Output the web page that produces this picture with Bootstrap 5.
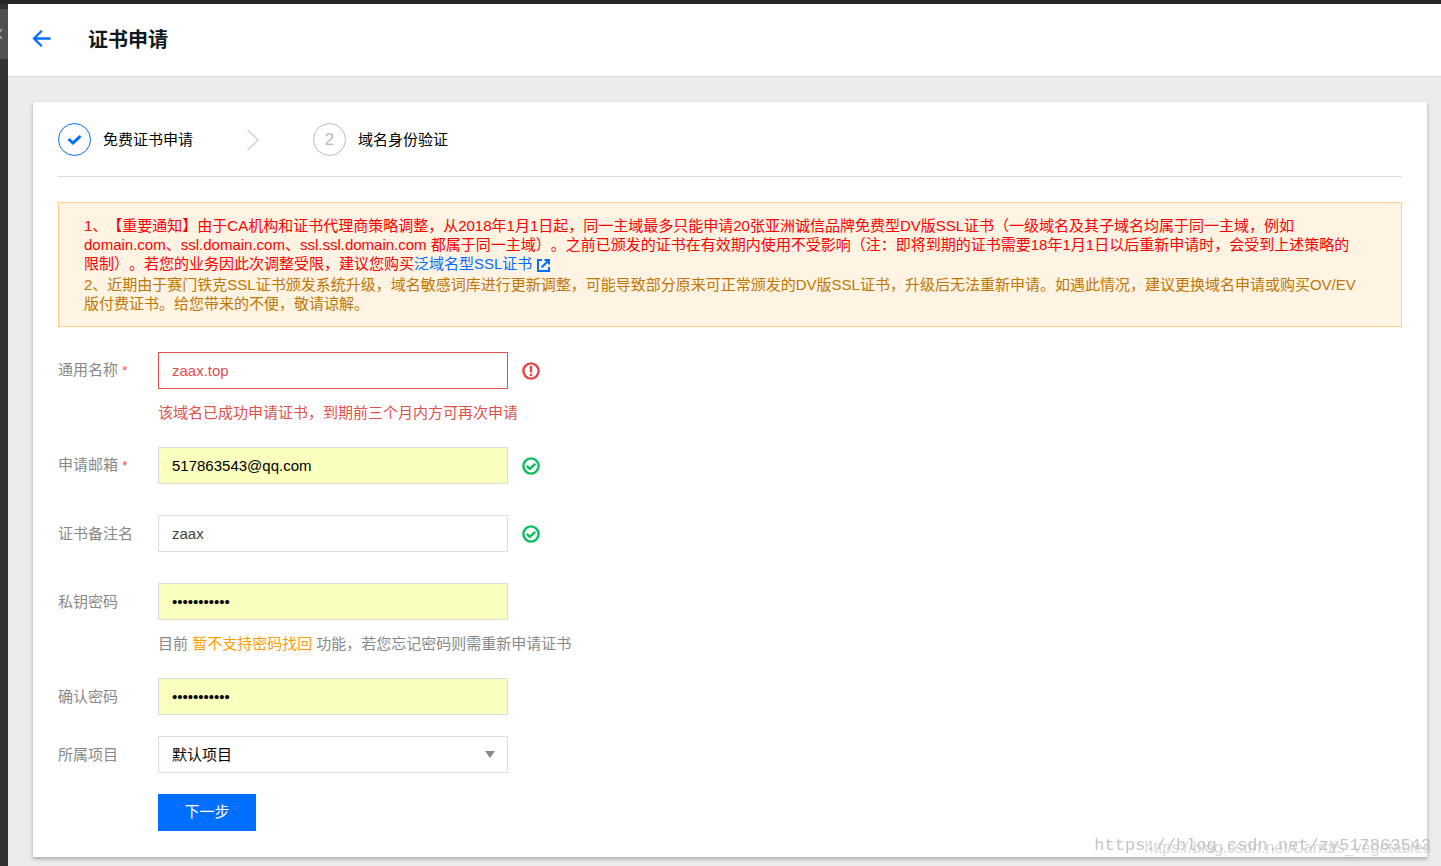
<!DOCTYPE html>
<html lang="zh-CN">
<head>
<meta charset="utf-8">
<meta name="viewport" content="width=device-width, initial-scale=1">
<title>证书申请</title>
<link href="https://cdn.jsdelivr.net/npm/bootstrap@5.3.0/dist/css/bootstrap.min.css" rel="stylesheet">
<style>
  body { font-family: "Liberation Sans", "Noto Sans CJK SC", sans-serif; font-size: 15px; line-height: 20px; color: #000; background: #ececec; text-spacing-trim: space-all; }
  a { color: #006eff; text-decoration: none; }
  .topline { height: 4px; background: #262626; }
  .side-rail { width: 8px; background: #333; padding-top: 5px; }
  .rail-toggle { width: 8px; height: 50px; background: #505050; color: #aaa; border: 0; }
  .page-head { height: 73px; padding: 0 24px; gap: 36px; border-bottom: 1px solid #d9dcdc; }
  .page-head h1 { font-size: 20px; line-height: 28px; font-weight: 700; color: #111820; }
  .page-body { padding: 25px 14px 9px 25px; }
  .panel { background: #fff; box-shadow: 0 2px 4px rgba(0,0,0,.3); padding: 21px 25px 26px; }
  .steps { padding-bottom: 20px; border-bottom: 1px solid #ddd; margin-bottom: 25px; list-style: none; }
  .step-dot { width: 33px; height: 33px; border: 1px solid #bbb; color: #bbb; font-size: 17px; margin-right: 12px; }
  .step-dot.done { border-color: #006eff; color: #006eff; }
  .step-sep { margin: 0 54px; }
  .notice { background: #fff3e3; border: 1px solid #ffd18b; color: #c07600; padding: 13px 40px 13px 25px; line-height: 19px; margin-bottom: 25px; }
  .notice p { margin: 0 0 2px; }
  .notice .urgent { color: #f00; }
  .form-line { display: grid; grid-template-columns: 100px minmax(0, 350px) 32px; align-items: center; margin-bottom: 31px; }
  .form-line.hinted { margin-bottom: 24px; }
  .form-line.tight { margin-bottom: 21px; }
  .form-line label { color: #888; }
  .form-line label span { color: #e1504a; font-size: 13px; }
  .form-line .form-control, .form-line .form-select { height: 37px; padding: 0 13px; font-size: 15px; line-height: 20px; color: #444; border: 1px solid #ddd; border-radius: 0; }
  .form-line .form-select { color: #000; background: #fff url("data:image/svg+xml,%3Csvg xmlns='http://www.w3.org/2000/svg' viewBox='0 0 10 7'%3E%3Cpath fill='%23888' d='M0 0h10L5 7z'/%3E%3C/svg%3E") no-repeat right 12px center / 10px 7px; }
  .form-line .is-bad { color: #e1504a; border-color: #e1504a; }
  .form-line .filled { background: #faffbd; color: #000; }
  .form-line svg { margin-left: 14px; }
  .hint { grid-column: 2 / -1; margin-top: 14px; color: #888; white-space: nowrap; }
  .hint.bad { color: #e1504a; }
  .hint em { font-style: normal; color: #ff9d00; }
  .next-btn { margin-left: 100px; width: 98px; height: 37px; padding: 0; font-size: 15px; background: #006eff; color: #fff; border: 0; border-radius: 0; }
  .stamp { right: 10px; bottom: 6px; width: 340px; height: 28px; pointer-events: none; white-space: nowrap; }
  .stamp span { position: absolute; right: 0; bottom: 0; }
  .stamp .mono-mark { font: 17px/28px "Liberation Mono", monospace; color: #c4c4be; }
  .stamp .plain-mark { font-size: 16px; line-height: 24px; color: rgba(200,200,200,.7); }
</style>
</head>
<body class="d-flex flex-column min-vh-100">
<div class="topline"></div>
<div class="d-flex flex-grow-1">
  <aside class="side-rail flex-shrink-0">
    <button class="rail-toggle d-block p-0" type="button" aria-label="展开菜单"><svg class="d-block" width="8" height="12" viewBox="0 0 8 12" fill="none" stroke="currentColor" stroke-width="1.5"><path d="M2 1-2 6 2 11"/></svg></button>
  </aside>
  <div class="flex-grow-1">
    <header class="page-head bg-white d-flex align-items-center">
      <a href="#" class="d-flex" aria-label="返回"><svg width="20" height="20" viewBox="0 0 20 20" fill="none" stroke="#006eff" stroke-width="2.3"><path d="M18.500 8.500H3M9.800 .800 2 8.500l7.800 7.700"/></svg></a>
      <h1 class="m-0">证书申请</h1>
    </header>
    <main class="page-body">
      <section class="panel">
        <ol class="steps d-flex align-items-center ps-0">
          <li class="d-flex align-items-center"><span class="step-dot done rounded-circle d-flex align-items-center justify-content-center"><svg width="15" height="12" viewBox="0 0 15 12" fill="none" stroke="currentColor" stroke-width="3"><path d="m1.500 5 4.500 4L13.500 2"/></svg></span>免费证书申请</li>
          <li class="step-sep d-flex" aria-hidden="true"><svg width="12" height="22" viewBox="0 0 12 22" fill="none" stroke="#ccc" stroke-width="1.200"><path d="m.5 1 10.500 10L.5 21"/></svg></li>
          <li class="d-flex align-items-center"><span class="step-dot rounded-circle d-flex align-items-center justify-content-center">2</span>域名身份验证</li>
        </ol>
        <div class="notice">
          <p class="urgent">1、【重要通知】由于CA机构和证书代理商策略调整，从2018年1月1日起，同一主域最多只能申请20张亚洲诚信品牌免费型DV版SSL证书（一级域名及其子域名均属于同一主域，例如 domain.com、ssl.domain.com、ssl.ssl.domain.com 都属于同一主域）。之前已颁发的证书在有效期内使用不受影响（注：即将到期的证书需要18年1月1日以后重新申请时，会受到上述策略的限制）。若您的业务因此次调整受限，建议您购买<a href="#">泛域名型SSL证书 <svg width="13" height="13" viewBox="0 0 13 13" fill="none" stroke="currentColor" stroke-width="2"><path d="M5 1H1v11h11V8M7.500 1H12v4.500M12 1 4.500 8.500"/></svg></a></p>
          <p class="m-0">2、近期由于赛门铁克SSL证书颁发系统升级，域名敏感词库进行更新调整，可能导致部分原来可正常颁发的DV版SSL证书，升级后无法重新申请。如遇此情况，建议更换域名申请或购买OV/EV版付费证书。给您带来的不便，敬请谅解。</p>
        </div>
        <form>
          <div class="form-line hinted">
            <label for="cn">通用名称 <span>*</span></label>
            <input id="cn" class="form-control is-bad" type="text" value="zaax.top">
            <svg width="18" height="18" viewBox="0 0 18 18" fill="none" stroke="#e54545" stroke-width="2.400"><circle cx="9" cy="9" r="7.600"/><path d="M9 4v6.500M9 11.800v2.200"/></svg>
            <div class="hint bad">该域名已成功申请证书，到期前三个月内方可再次申请</div>
          </div>
          <div class="form-line">
            <label for="mail">申请邮箱 <span>*</span></label>
            <input id="mail" class="form-control filled" type="email" value="517863543@qq.com">
            <svg width="18" height="18" viewBox="0 0 18 18" fill="none" stroke="#0abf5b" stroke-width="2.400"><circle cx="9" cy="9" r="7.600"/><path d="m4.800 8.800 3 3 5.400-5"/></svg>
          </div>
          <div class="form-line">
            <label for="alias">证书备注名</label>
            <input id="alias" class="form-control" type="text" value="zaax">
            <svg width="18" height="18" viewBox="0 0 18 18" fill="none" stroke="#0abf5b" stroke-width="2.400"><circle cx="9" cy="9" r="7.600"/><path d="m4.800 8.800 3 3 5.400-5"/></svg>
          </div>
          <div class="form-line hinted">
            <label for="pw">私钥密码</label>
            <input id="pw" class="form-control filled" type="password" value="abcdefghijk">
            <div class="hint">目前 <em>暂不支持密码找回</em> 功能，若您忘记密码则需重新申请证书</div>
          </div>
          <div class="form-line tight">
            <label for="pw2">确认密码</label>
            <input id="pw2" class="form-control filled" type="password" value="abcdefghijk">
          </div>
          <div class="form-line tight">
            <label for="project">所属项目</label>
            <select id="project" class="form-select"><option>默认项目</option></select>
          </div>
          <button class="next-btn btn d-block" type="submit">下一步</button>
        </form>
      </section>
    </main>
  </div>
</div>
<div class="stamp position-fixed"><span class="mono-mark">https://blog.csdn.net/zy517863543</span><span class="plain-mark">https://blog.csdn.net/Carrots_vegetables</span></div>
<script src="https://cdn.jsdelivr.net/npm/bootstrap@5.3.0/dist/js/bootstrap.bundle.min.js"></script>
</body>
</html>
